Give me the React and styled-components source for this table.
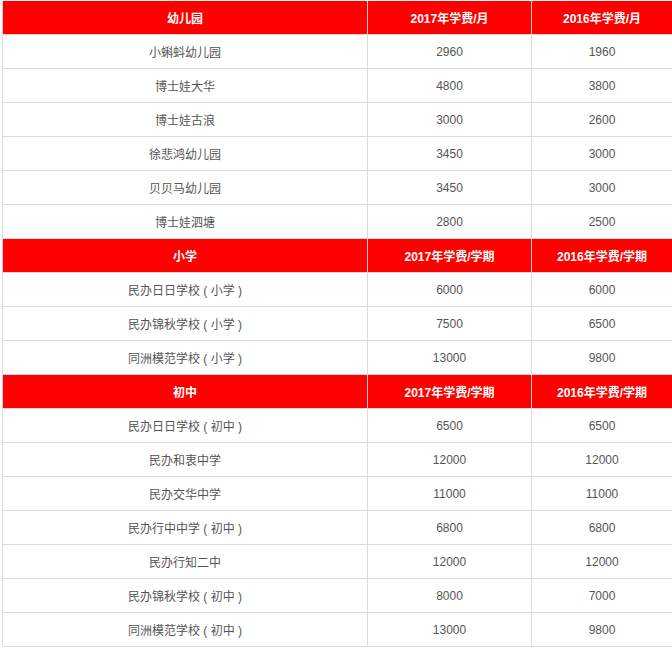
import React from 'react';
import styled, { createGlobalStyle } from 'styled-components';

const GlobalStyle = createGlobalStyle`
  body {
    margin: 0;
    background: #fff;
    font-family: "Liberation Sans", "Noto Sans CJK SC", sans-serif;
  }
`;

const Wrap = styled.div`
  padding: 1px 0 0 2px;
`;

const Table = styled.table`
  width: 670px;
  border-collapse: collapse;
  table-layout: fixed;
  font-size: 12px;
`;

const HeadCell = styled.td`
  height: 33px;
  padding: 0;
  background: #ff0000;
  color: #fff;
  font-weight: bold;
  text-align: center;
  border: 1px solid #f5d0d0;
  border-top: none;
`;

const Cell = styled.td`
  height: 33px;
  padding: 0;
  color: #555;
  text-align: center;
  border: 1px solid #dcdcdc;
`;

const sections = [
  {
    title: '幼儿园',
    unit: '月',
    rows: [
      ['小蝌蚪幼儿园', '2960', '1960'],
      ['博士娃大华', '4800', '3800'],
      ['博士娃古浪', '3000', '2600'],
      ['徐悲鸿幼儿园', '3450', '3000'],
      ['贝贝马幼儿园', '3450', '3000'],
      ['博士娃泗塘', '2800', '2500'],
    ],
  },
  {
    title: '小学',
    unit: '学期',
    rows: [
      ['民办日日学校 ( 小学 )', '6000', '6000'],
      ['民办锦秋学校 ( 小学 )', '7500', '6500'],
      ['同洲模范学校 ( 小学 )', '13000', '9800'],
    ],
  },
  {
    title: '初中',
    unit: '学期',
    rows: [
      ['民办日日学校 ( 初中 )', '6500', '6500'],
      ['民办和衷中学', '12000', '12000'],
      ['民办交华中学', '11000', '11000'],
      ['民办行中中学 ( 初中 )', '6800', '6800'],
      ['民办行知二中', '12000', '12000'],
      ['民办锦秋学校 ( 初中 )', '8000', '7000'],
      ['同洲模范学校 ( 初中 )', '13000', '9800'],
    ],
  },
];

export default function App() {
  return (
    <>
      <GlobalStyle />
      <Wrap>
        <Table>
          <colgroup>
            <col style={{ width: 365 }} />
            <col style={{ width: 164 }} />
            <col style={{ width: 141 }} />
          </colgroup>
          <tbody>
            {sections.map((sec) => (
              <React.Fragment key={sec.title}>
                <tr>
                  <HeadCell>{sec.title}</HeadCell>
                  <HeadCell>2017年学费/{sec.unit}</HeadCell>
                  <HeadCell>2016年学费/{sec.unit}</HeadCell>
                </tr>
                {sec.rows.map((r) => (
                  <tr key={r[0]}>
                    <Cell>{r[0]}</Cell>
                    <Cell>{r[1]}</Cell>
                    <Cell>{r[2]}</Cell>
                  </tr>
                ))}
              </React.Fragment>
            ))}
          </tbody>
        </Table>
      </Wrap>
    </>
  );
}
